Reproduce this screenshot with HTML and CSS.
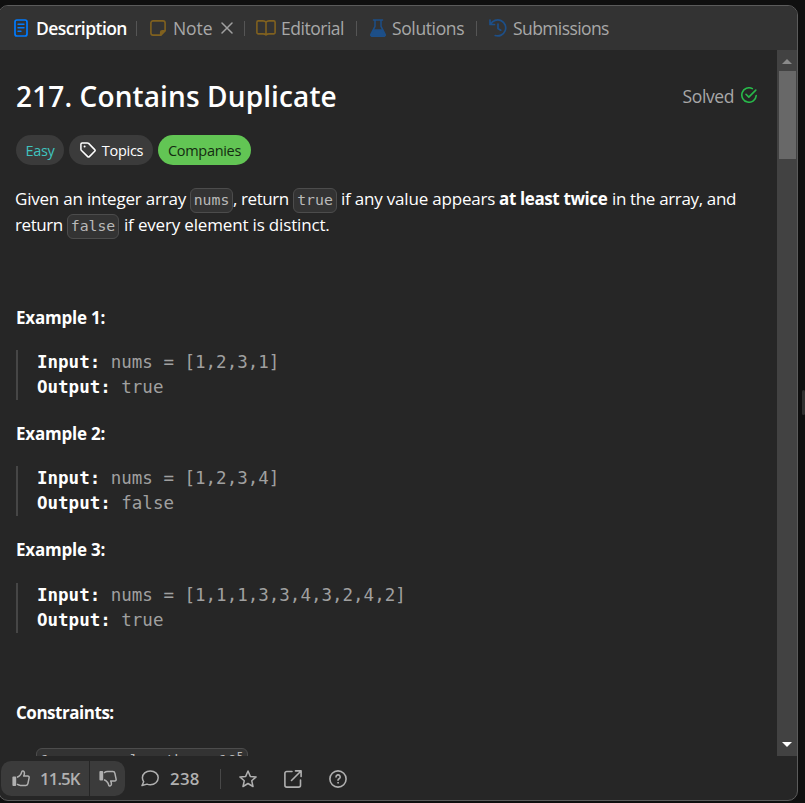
FILE: index.html
```
<!DOCTYPE html>
<html lang="en">
<head>
<meta charset="utf-8">
<title>Contains Duplicate</title>
<link rel="stylesheet" href="styles.css">
</head>
<body>
<div class="panel">
  <nav class="tabs">
    <div class="tab tab-description active">
      <svg width="14" height="18" viewBox="0 0 14 18" fill="none" stroke="#007bff" stroke-width="1.7" stroke-linecap="round"><rect x="1" y="1" width="12" height="16" rx="2"/><path d="M4 5.2h6M4 8.7h6M4 12.2h3" stroke-width="1.4"/></svg>
      <span>Description</span>
    </div>
    <i class="sep"></i>
    <div class="tab tab-note">
      <svg width="16" height="16" viewBox="0 0 16 16" fill="none" stroke="#80611f" stroke-width="1.6" stroke-linejoin="round"><path d="M3 .9h10a2.1 2.1 0 0 1 2.1 2.1v7.8l-4.3 4.3H3A2.1 2.1 0 0 1 .9 13V3A2.1 2.1 0 0 1 3 .9z"/><path d="M15 10.7h-2.7a1.6 1.6 0 0 0-1.6 1.6V15z" fill="#80611f"/></svg>
      <span>Note</span>
      <svg class="close" width="12" height="12" viewBox="0 0 12 12" stroke="#a0a0a0" stroke-width="1.5" stroke-linecap="round"><path d="M1 1l10 10M11 1L1 11"/></svg>
    </div>
    <i class="sep"></i>
    <div class="tab tab-editorial">
      <svg width="20" height="16" viewBox="0 0 20 16" fill="none" stroke="#80611f" stroke-width="1.6" stroke-linejoin="round"><path d="M10 2.2C9.300 1.300 8.200.9 7 .9H2.300A1.400 1.400 0 0 0 .9 2.300v10.200a1.400 1.400 0 0 0 1.400 1.400H7c1.300 0 2.300.3 3 1.100.7-.8 1.700-1.100 3-1.100h4.700a1.400 1.400 0 0 0 1.400-1.400V2.300A1.400 1.400 0 0 0 17.700.9H13c-1.200 0-2.300.4-3 1.300zV15"/></svg>
      <span>Editorial</span>
    </div>
    <i class="sep"></i>
    <div class="tab tab-solutions">
      <svg width="16" height="18" viewBox="0 0 16 18" fill="none" stroke="#1d4f88" stroke-width="1.5" stroke-linejoin="round" stroke-linecap="round"><path d="M3.500.9h9M5 1v6.300L1 15.200c-.5 1 .1 2 1.200 2h11.600c1.100 0 1.700-1 1.200-2L11 7.300V1"/><path d="M4 11h8l3 5.200-1 1H2l-1-1z" fill="#1d4f88"/></svg>
      <span>Solutions</span>
    </div>
    <i class="sep"></i>
    <div class="tab tab-submissions">
      <svg width="18" height="18" viewBox="0 0 18 18" fill="none" stroke="#1d4f88" stroke-width="1.7" stroke-linecap="round" stroke-linejoin="round"><path d="M1 1v4.500h4.500M1.600 5.200A8 8 0 1 1 6.200 16.500M9 5v4.500l2.700 1.700"/></svg>
      <span>Submissions</span>
    </div>
  </nav>

  <div class="body">
    <main class="content">
      <header class="heading">
        <h1>217. Contains Duplicate</h1>
        <div class="solved"><span>Solved</span>
          <svg width="16" height="16" viewBox="0 0 16 16" fill="none" stroke="#28b94a" stroke-width="1.6" stroke-linecap="round" stroke-linejoin="round"><path d="M11.300 1.600A7.200 7.200 0 1 0 15.200 8.600M5 7.300l2.800 2.800 7-7"/></svg>
        </div>
      </header>
      <div class="tags">
        <span class="tag easy">Easy</span>
        <span class="tag topics"><svg width="16" height="16" viewBox="0 0 16 16" fill="none" stroke="#fff" stroke-width="1.5" stroke-linejoin="round"><path d="M2.200.9h5.100c.5 0 .9.2 1.300.5l6.100 6.200c.5.500.5 1.200 0 1.700l-5.300 5.300c-.5.5-1.200.5-1.700 0L1.500 8.500C1.100 8.100.9 7.700.9 7.200V2.200c0-.8.5-1.300 1.300-1.300z"/><circle cx="4.600" cy="4.600" r="1" fill="#fff" stroke="none"/></svg>Topics</span>
        <span class="tag companies">Companies</span>
      </div>
      <div class="statement">
        <div class="line"><span class="t1">Given an integer array</span><code class="c1">nums</code><span class="t2">, return</span><code class="c2">true</code><span class="t3">if any value appears</span><b>at least twice</b><span class="t4">in the array, and</span></div>
        <div class="line"><span class="t5">return</span><code class="c3">false</code><span class="t6">if every element is distinct.</span></div>
      </div>
      <section class="example">
        <h2>Example 1:</h2>
        <pre><b>Input:</b> nums = [1,2,3,1]
<b>Output:</b> true</pre>
      </section>
      <section class="example">
        <h2>Example 2:</h2>
        <pre><b>Input:</b> nums = [1,2,3,4]
<b>Output:</b> false</pre>
      </section>
      <section class="example third">
        <h2>Example 3:</h2>
        <pre><b>Input:</b> nums = [1,1,1,3,3,4,3,2,4,2]
<b>Output:</b> true</pre>
      </section>
      <section class="constraints">
        <h2>Constraints:</h2>
        <code>1 &lt;= nums.length &lt;= 10<sup>5</sup></code>
      </section>
    </main>
    <div class="scrollbar">
      <svg width="10" height="5" viewBox="0 0 10 5"><path d="M0 5l5-5 5 5z" fill="#8a8a8a"/></svg>
      <div class="thumb"></div>
      <svg class="down" width="10" height="5" viewBox="0 0 10 5"><path d="M0 0h10L5 5z" fill="#fff"/></svg>
    </div>
  </div>

  <footer class="actions">
    <div class="votes">
      <div class="vote up">
        <svg width="18" height="17" viewBox="0 0 18 17" fill="none" stroke="#b0b0b0" stroke-width="1.500" stroke-linejoin="round"><path d="M5 7.300c2.400-1 4.200-2.700 4.700-5.400.2-1.300 2.600-1.200 2.700.8.100 1.200-.2 2.300-.7 3.400h4c1 0 1.600.7 1.400 1.700l-1.200 5.900c-.2 1-1 1.700-2 1.700H8.500c-1.300 0-2.100-.3-3.500-1.200"/><rect x=".4" y="6.500" width="3.800" height="9.500" rx="1" fill="#b0b0b0" stroke="none"/></svg>
        <span>11.5K</span>
      </div>
      <div class="vote down-vote">
        <svg width="18" height="17" viewBox="0 0 18 17" fill="none" stroke="#b0b0b0" stroke-width="1.500" stroke-linejoin="round"><path d="M5 9.700c2.400 1 4.200 2.700 4.700 5.400.2 1.300 2.600 1.200 2.700-.8.100-1.200-.2-2.300-.7-3.400h4c1 0 1.600-.7 1.400-1.700l-1.200-5.900c-.2-1-1-1.700-2-1.700H8.500c-1.300 0-2.100.3-3.500 1.200"/><rect x=".4" y="1" width="3.800" height="9.500" rx="1" fill="#b0b0b0" stroke="none"/></svg>
      </div>
    </div>
    <div class="comments">
      <svg width="18" height="17" viewBox="0 0 18 17" fill="none" stroke="#b0b0b0" stroke-width="1.500" stroke-linejoin="round"><path d="M9.300 1C13.700 1 17.200 3.900 17.200 7.800s-3.500 6.900-7.900 6.900c-1.200 0-2.300-.2-3.300-.6L1 15.500l1.700-3.700c-.8-1.100-1.300-2.500-1.300-4C1.400 3.900 4.900 1 9.300 1z"/></svg>
      <span>238</span>
    </div>
    <i class="divider"></i>
    <svg class="tool" width="18" height="18" viewBox="0 0 18 18" fill="none" stroke="#b0b0b0" stroke-width="1.500" stroke-linejoin="round"><path d="M9 1l2.300 5.400 5.800.5-4.400 3.800 1.300 5.800L9 13.500l-5 3 1.300-5.800L.9 6.900l5.800-.5z"/></svg>
    <svg class="tool" width="18" height="18" viewBox="0 0 18 18" fill="none" stroke="#b0b0b0" stroke-width="1.600" stroke-linecap="round" stroke-linejoin="round"><path d="M8 1.500H2.800A1.900 1.900 0 0 0 .9 3.400v11.800a1.900 1.900 0 0 0 1.900 1.900h11.800a1.900 1.900 0 0 0 1.900-1.900V10M11.500.9h5.600v5.600M17 1L7.500 10.500"/></svg>
    <svg class="tool" width="18" height="18" viewBox="0 0 18 18" fill="none" stroke="#b0b0b0" stroke-width="1.600" stroke-linecap="round" stroke-linejoin="round"><circle cx="9" cy="9" r="8.100"/><path d="M7 7a2.100 2.100 0 1 1 3.100 1.800c-.7.400-1.100.7-1.100 1.400"/><circle cx="9" cy="12.800" r=".5" fill="#b0b0b0" stroke-width=".8"/></svg>
  </footer>
</div>
<div class="handle"></div>
</body>
</html>
```
FILE: styles.css
```
* { box-sizing: border-box; }

body {
  margin: 0;
  height: 803px;
  overflow: hidden;
  display: flex;
  background: #0f0f0f;
  color: #fff;
  font: 17px/26px "Open Sans", "Noto Sans", sans-serif;
}

svg { flex: none; display: block; }
h1, h2, pre { margin: 0; }
span, b, h1, h2 { white-space: pre; }

.panel {
  width: 800px;
  height: 796px;
  margin: 5px 0 0 -2px;
  flex: none;
  display: flex;
  flex-direction: column;
  background: #262626;
  border: 1px solid #5b5b5b;
  border-radius: 10px;
  overflow: hidden;
}

.tabs {
  height: 44px;
  flex: none;
  display: flex;
  align-items: center;
  padding-left: 15px;
  background: #333;
  color: #a8a8a8;
  font-size: 17.5px;
}
.tab { display: flex; align-items: center; height: 44px; }
.tab span { line-height: 44px; }
.tab-description { width: 122px; gap: 8px; letter-spacing: -.56px; }
.tab-note { width: 94px; gap: 7px; margin-left: 13px; letter-spacing: -.1px; }
.tab-editorial { width: 100px; gap: 5px; margin-left: 11px; letter-spacing: -.48px; }
.tab-solutions { width: 106px; gap: 6px; margin-left: 13px; letter-spacing: -.38px; }
.tab-submissions { gap: 6px; margin-left: 12px; letter-spacing: -.6px; }
.close { margin-left: 2px; }
.active { color: #fff; font-weight: 600; }
.sep { width: 1px; height: 15px; background: #555; }

.body { height: 706px; flex: none; display: flex; overflow: hidden; }
.content { width: 778px; padding: 28px 20px 0 17px; overflow: hidden; }

.heading { height: 36px; display: flex; justify-content: space-between; }
h1 { font-size: 28px; line-height: 36px; font-weight: 600; letter-spacing: .12px; }
.solved { display: flex; gap: 7px; color: #a8a8a8; font-size: 17.5px; line-height: 36px; letter-spacing: -.4px; }
.solved svg { margin-top: 9px; }

.tags { display: flex; gap: 5px; margin-top: 21px; font-size: 14.5px; line-height: 31px; letter-spacing: -.3px; }
.tag { height: 30px; border-radius: 15px; background: #3b3b3b; display: flex; justify-content: center; }
.easy { width: 48px; color: #3fc4bf; }
.topics { width: 84px; gap: 6px; padding-left: 1px; }
.topics svg { margin-top: 7px; }
.companies { width: 93px; background: #62c554; color: #142b11; }

.statement { margin: 21px 0 0 -1px; }
.line { display: flex; height: 26px; }
code {
  font: 14.8px/22px "DejaVu Sans Mono", "Liberation Mono", monospace;
  height: 25px;
  margin-top: 2px;
  background: #333;
  border: 1px solid #4c4c4c;
  border-radius: 6px;
  color: #b9b9b9;
  text-align: center;
  flex: none;
  white-space: pre;
}
.line span, .line b { flex: none; }
.t1 { width: 175px; letter-spacing: -.21px; }
.c1 { width: 43px; }
.t2 { width: 60px; letter-spacing: -.42px; }
.c2 { width: 44px; margin-right: 4px; }
.t3 { width: 158px; letter-spacing: -.2px; }
.line b { width: 113px; letter-spacing: -.38px; }
.t4 { letter-spacing: -.35px; }
.t5 { width: 52px; letter-spacing: -.42px; }
.c3 { width: 52px; margin-right: 5px; }
.t6 { letter-spacing: -.17px; }

h2 { font-size: 17px; line-height: 26px; font-weight: 700; letter-spacing: -.22px; }
.example { height: 116px; }
.statement + .example { margin-top: 67px; }
pre {
  margin-top: 19px;
  height: 50px;
  border-left: 2px solid #464646;
  padding-left: 19px;
  font: 17.5px/25px "DejaVu Sans Mono", "Liberation Mono", monospace;
  color: #a0a0a0;
}
pre b { color: #fff; }
.third pre { margin-top: 20px; }

.constraints { margin-top: 47px; }
.constraints h2 { letter-spacing: -.47px; }
.constraints code { display: block; width: 212px; margin: 22px 0 0 20px; }
.constraints sup { font-size: 11px; line-height: 0; vertical-align: 5px; }

.scrollbar { width: 20px; background: #424242; display: flex; flex-direction: column; align-items: center; padding-top: 9px; }
.thumb { width: 17px; height: 88px; margin-top: 7px; background: #686868; }
.down { margin-top: auto; margin-bottom: 9px; }

.actions { flex: 1; display: flex; align-items: center; padding: 1px 0 0 2px; color: #b0b0b0; font-size: 16.8px; font-weight: 600; }
.votes { display: flex; gap: 1px; border-radius: 10px; overflow: hidden; }
.vote { height: 35px; display: flex; align-items: center; background: #3b3b3b; }
.up { width: 88px; padding-left: 11px; gap: 10px; letter-spacing: -.9px; }
.down-vote { width: 35px; padding-left: 9px; }
.comments { display: flex; align-items: center; gap: 11px; margin-left: 16px; width: 79px; letter-spacing: .3px; }
.divider { width: 1px; height: 20px; background: #484848; margin-right: 18px; }
.tool { margin-right: 27px; }

.handle { width: 3px; height: 25px; margin: 390px 0 0 4px; background: #303030; border-radius: 2px; }
```
